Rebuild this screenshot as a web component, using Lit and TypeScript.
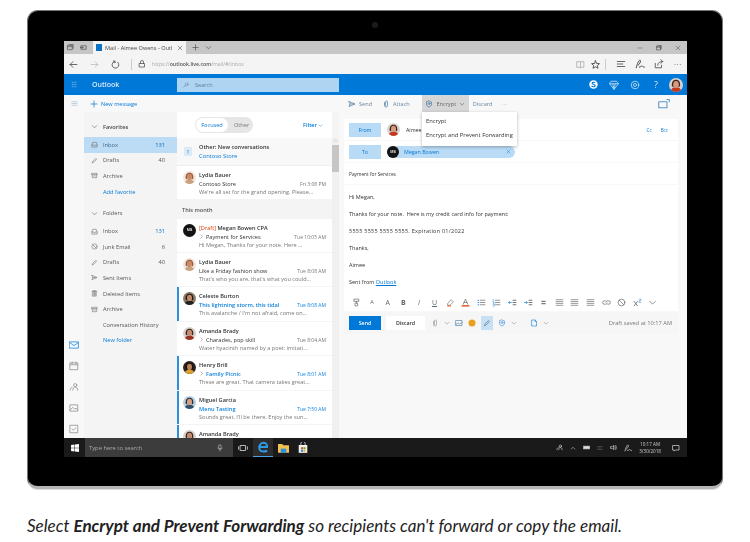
import { LitElement, html, css, svg } from "lit";
import { customElement } from "lit/decorators.js";

const ic = (w: number, body: unknown, color = "#666", vb = 16) => html`<svg class="ic" width=${w} height=${w} viewBox="0 0 ${vb} ${vb}" fill="none" stroke=${color} stroke-width="1.4" stroke-linecap="round" stroke-linejoin="round">${body}</svg>`;

const P = {
  inbox: svg`<path d="M2 13V9l2-6h8l2 6v4zM2 9h4l1 2h2l1-2h4"/>`,
  pen: svg`<path d="M3 13l1-3 7-7 2 2-7 7z"/>`,
  archive: svg`<path d="M2 3h12v3H2zM3 6v7h10V6M6 9h4"/>`,
  junk: svg`<circle cx="8" cy="8" r="6"/><path d="M4 4l8 8"/>`,
  sent: svg`<path d="M2 3l12 5-12 5 2-5zM4 8h8"/>`,
  trash: svg`<path d="M4 3h8v11H4zM3 3h10M6 1.500h4M6 6v6M10 6v6M8 6v6"/>`,
  chev: svg`<path d="M3 6l5 5 5-5"/>`,
  chevr: svg`<path d="M6 3l5 5-5 5"/>`,
  close: svg`<path d="M3 3l10 10M13 3L3 13"/>`,
  plus: svg`<path d="M8 2v12M2 8h12"/>`,
  clip: svg`<path d="M5 5v6a3 3 0 006 0V4a2 2 0 00-4 0v7"/>`,
  shield: svg`<path d="M8 2l5 2v4c0 3-2 5-5 6-3-1-5-3-5-6V4z"/><circle cx="8" cy="7" r="2"/>`,
  mail: svg`<path d="M1 3h14v10H1zM1 4l7 5 7-5"/>`,
  cal: svg`<path d="M2 3h12v11H2zM2 6h12M5 1.500v3M11 1.500v3"/>`,
  people: svg`<circle cx="10" cy="5" r="2.500"/><path d="M6 13c0-3 2-5 4-5s4 2 4 5M2 13c0-2 1-4 3-5"/>`,
  photo: svg`<path d="M2 3h12v10H2zM2 11l4-4 3 3 2-2 3 3"/>`,
  check: svg`<path d="M2 2h12v12H2zM5 8l2 2 4-4"/>`,
  pop: svg`<path d="M1 5h11v8H1zM12 2h3v3"/>`,
  search: svg`<circle cx="9.500" cy="6.500" r="4"/><path d="M6.500 9.500L2 14"/>`,
  back: svg`<path d="M14 8H2M7 3L2 8l5 5"/>`,
  fwd: svg`<path d="M2 8h12M9 3l5 5-5 5"/>`,
  refresh: svg`<path d="M12 4a6 6 0 11-5-1.500M5 1v3h3"/>`,
  lock: svg`<path d="M3 7h10v7H3zM5 7V4a3 3 0 016 0v3"/>`,
  tabs: svg`<path d="M2 3h10v10H2zM5 1h9v9M2 6h10" />`,
  aside: svg`<path d="M3 4h11v8H3zM1 8h6M5 6l2 2-2 2"/>`,
  book: svg`<path d="M2 3h12v10H2zM8 3v10"/>`,
  star: svg`<path d="M8 1.500l2 4.600 5 .4-3.800 3.300 1.200 4.900L8 12.100l-4.400 2.600 1.200-4.900L1 6.500l5-.4z"/>`,
  hub: svg`<path d="M2 4h12M2 8h9M2 12h12"/>`,
  ink: svg`<path d="M2 14c2-8 4-12 6-12s0 6-3 8M7 13c2 0 3-2 4-2s1 2 4 2"/>`,
  share: svg`<path d="M2 7v7h10V10M6 10c0-4 3-6 8-6M11 1l3 3-3 3"/>`,
  gem: svg`<path d="M4 2h8l3 4-7 9-7-9zM1 6h14M6 6l2 9 2-9"/>`,
  gear: svg`<circle cx="8" cy="8" r="6"/><circle cx="8" cy="8" r="2.500"/>`,
  mic: svg`<path d="M6 2h4v7H6zM4 8c0 2 2 3 4 3s4-1 4-3M8 11v3"/>`,
  task: svg`<path d="M4 4h8v8H4zM1 6v4M15 6v4"/>`,
  note: svg`<path d="M2 3h12v9H7l-3 2v-2H2z"/>`,
  vol: svg`<path d="M2 6h3l3-3v10l-3-3H2zM11 5c1 2 1 4 0 6M13 3c2 3 2 7 0 10"/>`,
  doc: svg`<path d="M4 2h6l3 3v9H4zM10 2v3h3"/>`,
  pic: svg`<path d="M2 3h12v10H2zM2 11l4-3 3 2 5-3"/>`,
  painter: svg`<path d="M4 2h8v4H4zM8 6v3M6 9h4v5H6z"/>`,
  highlight: svg`<path d="M3 10l6-7 4 4-6 6H4z" stroke="#888"/><path d="M3 14h5" stroke="#e07020" stroke-width="2"/>`,
  colorA: svg`<path d="M4 11l4-9 4 9M5.500 8h5" stroke="#777"/><path d="M2 14h12" stroke="#d83b01" stroke-width="2"/>`,
  bullets: svg`<path d="M2 4h1M2 8h1M2 12h1" stroke="#2b8fe0" stroke-width="2"/><path d="M6 4h8M6 8h8M6 12h8"/>`,
  numbers: svg`<path d="M2 2.500v3M2 7h1.500L2 9.500h2M2 11.500h2v3h-2" stroke="#2b8fe0" stroke-width="1"/><path d="M6 4h8M6 8h8M6 12h8"/>`,
  outdent: svg`<path d="M1 8h5M3 6L1 8l2 2" stroke="#2b8fe0"/><path d="M9 4h5M9 8h5M9 12h5" stroke-width="2"/>`,
  indent: svg`<path d="M1 8h5M4 6l2 2-2 2" stroke="#2b8fe0"/><path d="M9 4h5M9 8h5M9 12h5" stroke-width="2"/>`,
  quote: svg`<path d="M5 6h6M5 10h6" stroke-width="1.800"/>`,
  left: svg`<path d="M2 3h12M2 6.300h12M2 9.600h12M2 13h12" stroke-width="1.300"/>`,
  link: svg`<path d="M6 5H4a3 3 0 000 6h3a3 3 0 002-2M10 11h2a3 3 0 000-6H9a3 3 0 00-2 2"/>`,
  sup: svg`<path d="M2 6l6 8M8 6l-6 8" stroke="#666"/><path d="M11 2h3v3h-3v3h3" stroke="#2b8fe0" stroke-width="1"/>`,
};

const avatar = (s: number, bg: string, hair: string, skin: string, shirt = "#333") => html`<svg class="ic" width=${s} height=${s} viewBox="0 0 24 24"><defs><clipPath id="c"><circle cx="12" cy="12" r="12"/></clipPath></defs><g clip-path="url(#c)"><rect width="24" height="24" fill=${bg}/><path d="M3 24c0-6 4-8 9-8s9 2 9 8z" fill=${shirt}/><path d="M5 14C4 6 8 3 12 3s8 3 7 11l-3 2V9H8v7z" fill=${hair}/><ellipse cx="12" cy="11" rx="4.600" ry="5.800" fill=${skin}/></g></svg>`;

const initials = (s: number) => html`<b class="mb" style="width:${s}px;height:${s}px">MB</b>`;

const AV = {
  lydia: () => avatar(13, "#efe6df", "#a0583a", "#c98a66", "#c9a080"),
  mb: () => initials(13),
  celeste: () => avatar(13, "#8a7a68", "#1d1613", "#c08a66", "#222"),
  amanda: () => avatar(13, "#d8d2cc", "#3a2a22", "#c48d72", "#9a3020"),
  henry: () => avatar(13, "#2b2320", "#17100d", "#b98256", "#e0a030"),
  miguel: () => avatar(13, "#b7cfe0", "#28303a", "#d2a184", "#31506e"),
  aimee: (s = 13) => avatar(s, "#d9d3cf", "#4a2218", "#d49a80", "#c03a20"),
};

type Nav = { icon?: unknown; label: string; n?: string; sel?: boolean; link?: boolean; accent?: boolean; head?: boolean; cls?: string };
const nav: Nav[] = [
  { head: true, label: "Favorites", cls: "fav" },
  { icon: P.inbox, label: "Inbox", n: "131", sel: true, accent: true },
  { icon: P.pen, label: "Drafts", n: "40" },
  { icon: P.archive, label: "Archive" },
  { link: true, label: "Add favorite" },
  { head: true, label: "Folders", cls: "fold" },
  { icon: P.inbox, label: "Inbox", n: "131", accent: true },
  { icon: P.junk, label: "Junk Email", n: "6" },
  { icon: P.pen, label: "Drafts", n: "40" },
  { icon: P.sent, label: "Sent Items" },
  { icon: P.trash, label: "Deleted Items" },
  { icon: P.archive, label: "Archive" },
  { label: "Conversation History" },
  { link: true, label: "New folder" },
];

type Mail = { av: () => unknown; from: string; draft?: boolean; subj?: string; arrow?: boolean; unread?: boolean; time?: string; prev?: string; h: number; bar?: boolean };
const mailsA: Mail[] = [
  { av: AV.lydia, from: "Lydia Bauer", subj: "Contoso Store", time: "Fri 3:08 PM", prev: "We're all set for the grand opening. Please...", h: 34 },
];
const mailsB: Mail[] = [
  { av: AV.mb, from: "Megan Bowen CPA", draft: true, subj: "Payment for Services", arrow: true, time: "Tue 10:05 AM", prev: "Hi Megan, Thanks for your note.  Here  ...", h: 34 },
  { av: AV.lydia, from: "Lydia Bauer", subj: "Like a Friday fashion show", time: "Tue 8:08 AM", prev: "That's who you are, that's what you could...", h: 34 },
  { av: AV.celeste, from: "Celeste Burton", subj: "This lightning storm, this tidal", unread: true, bar: true, time: "Tue 8:08 AM", prev: "This avalanche / I'm not afraid, come on...", h: 35 },
  { av: AV.amanda, from: "Amanda Brady", subj: "Charades, pop skill", arrow: true, time: "Tue 8:04 AM", prev: "Water hyacinth named by a poet: imitati...", h: 34 },
  { av: AV.henry, from: "Henry Brill", subj: "Family Picnic", arrow: true, unread: true, bar: true, time: "Tue 8:01 AM", prev: "These are great. That camera takes great...", h: 35 },
  { av: AV.miguel, from: "Miguel Garcia", subj: "Menu Tasting", unread: true, bar: true, time: "Tue 7:50 AM", prev: "Sounds great, I'll be there. Enjoy the sun...", h: 34 },
  { av: AV.amanda, from: "Amanda Brady", bar: true, h: 14 },
];

const fmtIcons: unknown[] = [
  P.painter, "a", "A", "B", "I", "U", P.highlight, P.colorA, P.bullets, P.numbers, P.outdent, P.indent, P.quote, P.left, P.left, P.left, P.link, P.junk, P.sup, P.chev,
];

@customElement("app-root")
export class AppRoot extends LitElement {
  static styles = css`
    :host { display: block; width: 750px; height: 542px; background: #fff; overflow: hidden; font-family: "Open Sans", "Noto Sans", sans-serif; color: #333; }
    * { box-sizing: border-box; }
    .ic { display: block; flex: none; }
    .page { padding: 10px 0 0 27px; }
    .tablet { width: 696px; height: 479px; background: #000; border: 1px solid #777; border-bottom: 3px solid #b4b4b4; border-radius: 11px; padding: 30px 0 0 36px; box-shadow: 0 1px 1px #ddd; display: flex; flex-direction: column; filter: blur(0.3px); position: relative; }
    .cam { position: absolute; left: 344px; top: 11px; width: 6px; height: 6px; border-radius: 50%; background: #1c1c1c; }
    .screen { width: 623px; height: 416px; display: flex; flex-direction: column; background: #f8f8f8; overflow: hidden; }
    .row { display: flex; align-items: center; }
    .tabbar { height: 13px; background: #c6c6c6; padding-left: 3px; gap: 6px; }
    .tab { width: 93px; height: 13px; background: #f4f4f4; padding: 0 3px; gap: 3px; font-size: 5.6px; color: #444; white-space: nowrap; }
    .tab span { flex: 1; }
    .outl { width: 6px; height: 7px; background: #0a72c6; flex: none; }
    .win { margin-left: auto; gap: 13px; padding-right: 6px; }
    .addr { height: 20px; background: #f4f4f4; padding-left: 5px; }
    .nm { width: 12px; flex: none; }
    .url { font-size: 5.2px; color: #aaa; margin-left: 6px; }
    .url b { color: #555; font-weight: 600; }
    .sep { width: 1px; height: 11px; background: #ccc; flex: none; }
    .sep.a { margin: 0 6px 0 11px; }
    .sep.b { margin: 0 1px 0 -4px; }
    .tools { gap: 9px; margin-left: auto; padding-right: 4px; }
    .pair { gap: 6px; }
    .dots { color: #555; font-size: 8px; letter-spacing: .5px; line-height: 6px; width: 10px; text-align: center; }
    .bluebar { height: 21px; background: #0078d7; color: #fff; padding-left: 7px; }
    .brand { font-size: 7px; font-weight: 600; margin-left: 14px; width: 85px; color: #dcecf9; }
    .search { width: 162px; height: 14px; background: #aed4f2; color: #5a7f9e; font-size: 5.6px; padding-left: 6px; gap: 6px; }
    .bright { margin-left: auto; gap: 11px; padding-right: 4px; }
    .help { font-size: 9px; color: #cfe4f6; width: 10px; text-align: center; margin-right: -3px; }
    .cmd { height: 17px; background: #f8f8f8; font-size: 5.6px; padding-left: 7px; }
    .newm { gap: 3px; color: #0078d7; margin-left: 12px; width: 258px; flex: none; }
    .acts { align-items: stretch; height: 17px; flex: 1; }
    .act { gap: 3px; color: #6a87a0; }
    .act.att { margin-left: 10px; }
    .enc { width: 47px; background: #d6d6d6; justify-content: center; margin: 0 4px 0 12px; color: #666; }
    .more { margin-left: 9px; color: #8aa; letter-spacing: .6px; }
    .popw { margin-left: auto; padding-right: 17px; }
    .main { flex: 1; display: flex; min-height: 0; }
    .rail { width: 20px; display: flex; flex-direction: column; justify-content: flex-end; align-items: center; gap: 11px; padding: 0 0 4px; background: #f8f8f8; }
    .nav { width: 93px; background: #f4f4f4; font-size: 5.7px; color: #555; padding-top: 4px; }
    .ni { height: 15.6px; padding: 0 12px 0 7px; gap: 5px; }
    .ni .lab { flex: 1; white-space: nowrap; }
    .ni .noicon { width: 7px; flex: none; }
    .ni.sel { background: #bcdbf4; }
    .ni.head { font-weight: 600; color: #444; }
    .ni.fav { height: 21px; }
    .ni.fold { margin-top: 4px; height: 20px; font-weight: 400; color: #555; }
    .ni.link { color: #0078d7; }
    .n.accent { color: #0a6cb8; }
    .ni .lab.accent { color: #3a6a90; }
    .list { width: 162px; display: flex; flex-direction: column; background: #f4f4f4; font-size: 5.6px; position: relative; overflow: hidden; }
    .ltop { height: 26px; background: #fff; padding: 0 9px 0 18px; flex: none; width: 155px; }
    .pill { width: 58px; height: 16px; border-radius: 8px; background: #e6e6e6; padding: 1px; color: #777; }
    .pill i { font-style: normal; width: 32px; height: 14px; background: #fff; border-radius: 7px; color: #0078d7; display: flex; align-items: center; justify-content: center; margin-right: 6px; }
    .filter { margin-left: auto; color: #0078d7; font-weight: 600; gap: 1px; }
    .scroll { position: absolute; right: 0; top: 26px; bottom: 0; width: 7px; background: #f0f0f0; display: flex; flex-direction: column; align-items: center; }
    .thumb { height: 27px; width: 7px; background: #c6c6c6; margin-top: 2px; }
    .other { height: 28px; width: 155px; background: #f8f8f8; padding-left: 7px; gap: 7px; flex: none; border-bottom: 1px solid #eee; }
    .badge { width: 8px; height: 9px; background: #dceaf6; color: #0078d7; font-size: 5px; display: flex; align-items: center; justify-content: center; }
    .other div { line-height: 8.5px; }
    .other b { font-weight: 600; display: block; color: #333; }
    .other a { color: #0078d7; font-size: 5.8px; }
    .mail { width: 155px; background: #fff; padding: 5px 6px 0 4px; display: flex; gap: 3px; border-left: 2px solid transparent; margin-bottom: 1px; flex: none; line-height: 8.5px; }
    .mail.bar { border-left-color: #2b8fe0; }
    .mail .txt { flex: 1; min-width: 0; }
    .mail .l1 { font-weight: 600; white-space: nowrap; color: #333; }
    .draft { color: #d83b01; font-weight: 400; }
    .l2 { gap: 2px; white-space: nowrap; color: #333; }
    .l2 .t { margin-left: auto; font-size: 5px; color: #777; }
    .l2.un span:not(.t) { color: #0f82de; font-weight: 600; }
    .l2.un .t { color: #0f82de; }
    .l3 { color: #777; white-space: nowrap; overflow: hidden; }
    .month { height: 19px; padding-left: 5px; display: flex; align-items: center; font-weight: 600; color: #555; flex: none; }
    .read { flex: 1; padding: 7px 9px 0 5px; font-size: 5.3px; color: #333; position: relative; }
    .card { background: #fff; margin-bottom: 1px; padding-left: 5px; }
    .rr { height: 21px; gap: 6px; }
    .bt { width: 32px; height: 14px; background: #b9dbf5; color: #0078d7; display: flex; align-items: center; justify-content: center; font-size: 5.3px; }
    .chip { width: 128px; height: 12px; border-radius: 6px; background: #b9dbf5; color: #0078d7; gap: 5px; padding-right: 4px; }
    .chip span { flex: 1; }
    .ccs { margin-left: auto; gap: 9px; padding-right: 10px; color: #0078d7; font-size: 4.6px; }
    .mb { background: #141414; border-radius: 50%; color: #ddd; font-size: 3.4px; display: flex; align-items: center; justify-content: center; flex: none; font-weight: 700; }
    .subj { height: 21px; margin-bottom: 1px; font-size: 4.8px; }
    .body { height: 126px; padding-top: 4px; font-size: 5.5px; line-height: 17px; }
    .line { height: 17px; }
    .line.num { letter-spacing: .25px; }
    .body a { color: #0078d7; text-decoration: underline; }
    .fmt { gap: 6.6px; height: 21px; margin-top: 1px; padding-left: 3px; }
    .fg { width: 9px; text-align: center; color: #666; flex: none; line-height: 9px; font-size: 7px; }
    .fg.s { font-size: 5.5px; }
    .fg.B { font-weight: 700; }
    .fg.I { font-style: italic; }
    .fg.U { text-decoration: underline; }
    .bottom { height: 22px; padding-left: 5px; background: #f6f6f6; gap: 5px; }
    .primary { width: 32px; height: 14px; background: #0078d7; color: #fff; font-weight: 600; display: flex; align-items: center; justify-content: center; }
    .disc { width: 39px; height: 14px; background: #fff; color: #333; font-weight: 600; display: flex; align-items: center; justify-content: center; margin-right: 1px; }
    .saved { margin-left: auto; color: #777; padding-right: 6px; font-size: 5.7px; }
    .hl { background: #c7e0f4; padding: 3px 2px; }
    .sp { width: 3px; flex: none; }
    .menu { position: absolute; left: 83px; top: 0; width: 95px; height: 34px; background: #fff; box-shadow: 0 1px 3px rgba(0,0,0,.3); font-size: 5.8px; color: #333; padding: 2px 4px; line-height: 14px; white-space: nowrap; z-index: 2; }
    .taskbar { height: 19px; background: #1a1a1a; flex: none; color: #ddd; }
    .start { width: 21px; display: flex; justify-content: center; }
    .tsearch { width: 148px; height: 19px; background: #3c3c3c; color: #aaa; font-size: 5.8px; padding: 0 9px 0 4px; justify-content: space-between; }
    .tk { width: 20px; height: 19px; display: flex; align-items: center; justify-content: center; }
    .tk.on { background: #2c2c2c; border-bottom: 1px solid #4aa3e8; }
    .tray { margin-left: auto; gap: 7px; padding-right: 7px; }
    .clock { font-size: 4.6px; line-height: 6.5px; text-align: center; color: #ccc; margin-right: 4px; }
    .cap { margin: 27px 0 0 27px; font-family: Lato, "Open Sans", sans-serif; font-style: italic; font-size: 17.05px; color: #222; line-height: 20px; white-space: nowrap; }
    .cap b { font-weight: 700; }
  `;

  private mail(m: Mail) {
    return html`<div class="mail ${m.bar ? "bar" : ""}" style="height:${m.h - 1}px">
      ${m.av()}
      <div class="txt">
        <div class="l1">${m.draft ? html`<span class="draft">[Draft] </span>` : ""}${m.from}</div>
        ${m.subj ? html`<div class="row l2 ${m.unread ? "un" : ""}">${m.arrow ? ic(5, P.chevr, "#555") : ""}<span>${m.subj}</span><span class="t">${m.time}</span></div>
        <div class="l3">${m.prev}</div>` : ""}
      </div>
    </div>`;
  }

  render() {
    return html`
    <div class="page">
      <div class="tablet">
        <div class="cam"></div>
        <div class="screen">
          <div class="row tabbar">
            ${ic(7, P.tabs, "#444")}${ic(7, P.aside, "#444")}
            <div class="row tab"><i class="outl"></i><span>Mail - Aimee Owens - Outl</span>${ic(6, P.close, "#444")}</div>
            ${ic(7, P.plus, "#444")}${ic(7, P.chev, "#444")}
            <div class="row win">${ic(6, svg`<path d="M3 8h10"/>`, "#555")}${ic(6, P.tabs, "#333")}${ic(6, P.close, "#555")}</div>
          </div>
          <div class="row addr">
            ${ic(9, P.back, "#444")}<span class="nm"></span>${ic(9, P.fwd, "#bbb")}<span class="nm"></span>${ic(9, P.refresh, "#444")}
            <span class="sep a"></span>${ic(8, P.lock, "#444")}
            <div class="url">https://<b>outlook.live.com</b>/mail/#/inbox</div>
            <div class="row tools">
              <div class="row pair">${ic(9, P.book, "#aaa")}${ic(9, P.star, "#333")}</div><span class="sep b"></span>${ic(10, P.hub, "#555")}${ic(10, P.ink, "#333")}${ic(10, P.share, "#555")}
              <span class="dots">···</span>
            </div>
          </div>
          <div class="row bluebar">
            ${ic(7, svg`<path stroke-dasharray="1.600 2.600" stroke-width="2" d="M2 3h12M2 8h12M2 13h12" stroke-linecap="butt"/>`, "#dbeaf7")}
            <div class="brand">Outlook</div>
            <div class="row search">${ic(6, P.search, "#5a7f9e")}Search</div>
            <div class="row bright">
              <svg class="ic" width="9" height="9" viewBox="0 0 16 16"><circle cx="8" cy="8" r="7.500" fill="#fff"/><path d="M11 5c-1-1.500-5-1.500-5.500.5S11 7.500 11 10s-5 2.500-6.500.5" fill="none" stroke="#0078d7" stroke-width="2"/></svg>
              ${ic(10, P.gem, "#bcdcf5")}${ic(10, P.gear, "#bcdcf5")}<span class="help">?</span>${AV.aimee(14)}
            </div>
          </div>
          <div class="row cmd">
            ${ic(7, svg`<path d="M2 4h12M2 8h12M2 12h12"/>`, "#9db9d2")}
            <div class="row newm">${ic(8, P.plus, "#0078d7")}New message</div>
            <div class="row acts">
              <div class="row act">${ic(8, P.sent, "#4a7aa6")}Send</div>
              <div class="row act att">${ic(8, P.clip, "#4a7aa6")}Attach</div>
              <div class="row act enc">${ic(8, P.shield, "#4a7aa6")}Encrypt ${ic(6, P.chev, "#555")}</div>
              <div class="row act">Discard</div>
              <span class="row more">···</span>
              <div class="row popw">${ic(12, P.pop, "#5a97c8")}</div>
            </div>
          </div>
          <div class="main">
            <div class="rail">
              ${ic(10, P.mail, "#2b8fe0")}${ic(10, P.cal, "#999")}${ic(10, P.people, "#999")}${ic(10, P.photo, "#999")}${ic(10, P.check, "#999")}
            </div>
            <div class="nav">
              ${nav.map((n) => html`<div class="row ni ${n.sel ? "sel" : ""} ${n.head ? "head" : ""} ${n.link ? "link" : ""} ${n.cls ?? ""}">
                ${n.head ? ic(7, P.chev, "#666") : n.icon ? ic(7, n.icon, "#777") : html`<span class="noicon"></span>`}
                <span class="lab ${n.sel ? "accent" : ""}">${n.label}</span>
                ${n.n ? html`<span class="n ${n.accent ? "accent" : ""}">${n.n}</span>` : ""}
              </div>`)}
            </div>
            <div class="list">
              <div class="row ltop">
                <div class="row pill"><i>Focused</i>Other</div>
                <div class="row filter">Filter ${ic(5, P.chev, "#0078d7")}</div>
              </div>
              <div class="row other"><span class="badge">1</span><div><b>Other: New conversations</b><a>Contoso Store</a></div></div>
              ${mailsA.map((m) => this.mail(m))}
              <div class="month">This month</div>
              ${mailsB.map((m) => this.mail(m))}
              <div class="scroll">${ic(5, svg`<path d="M3 11l5-5 5 5"/>`, "#aaa")}<div class="thumb"></div></div>
            </div>
            <div class="read">
              <div class="menu"><div>Encrypt</div><div>Encrypt and Prevent Forwarding</div></div>
              <div class="card row rr"><span class="bt">From</span>${AV.aimee(13)}<span>Aimee</span><div class="row ccs"><span>Cc</span><span>Bcc</span></div></div>
              <div class="card row rr"><span class="bt">To</span><div class="row chip">${initials(12)}<span>Megan Bowen</span>${ic(5, P.close, "#0078d7")}</div></div>
              <div class="card row subj">Payment for Services</div>
              <div class="card body">
                <div class="line">Hi Megan,</div>
                <div class="line">Thanks for your note.&nbsp; Here is my credit card info for payment:</div>
                <div class="line num">5555 5555 5555 5555. Expiration 01/2022</div>
                <div class="line">Thanks,</div>
                <div class="line">Aimee</div>
                <div class="line">Sent from <a>Outlook</a></div>
                <div class="row fmt">
                  ${fmtIcons.map((f) => typeof f === "string"
                    ? html`<span class="fg ${f === "a" ? "s" : f}">${f === "a" ? "A" : f}</span>`
                    : ic(9, f, "#777"))}
                </div>
              </div>
              <div class="row bottom">
                <span class="primary">Send</span><span class="disc">Discard</span>
                ${ic(8, P.clip, "#999")}${ic(6, P.chev, "#888")}${ic(8, P.pic, "#5a86aa")}
                <svg class="ic" width="8" height="8" viewBox="0 0 16 16"><circle cx="8" cy="8" r="7" fill="#e8a020"/></svg>
                <span class="hl">${ic(8, P.pen, "#4a7aa6")}</span>
                ${ic(8, P.shield, "#4a9ae0")}${ic(6, P.chev, "#888")}<span class="sp"></span>${ic(8, P.doc, "#2b8fe0")}${ic(6, P.chev, "#888")}
                <span class="saved">Draft saved at 10:17 AM</span>
              </div>
            </div>
          </div>
          <div class="row taskbar">
            <div class="start"><svg class="ic" width="8" height="8" viewBox="0 0 16 16" fill="#fff"><path d="M0 2l7-1v6.500H0zM8 1l8-1v7.500H8zM0 8.500h7V15l-7-1zM8 8.500h8V16l-8-1z"/></svg></div>
            <div class="row tsearch"><span>Type here to search</span>${ic(8, P.mic, "#aaa")}</div>
            <div class="tk">${ic(10, P.task, "#ccc")}</div>
            <div class="tk on"><svg class="ic" width="10" height="12" viewBox="0 0 12 14" fill="none" stroke="#2d9ae8" stroke-width="2.400"><path d="M2 7h9c0-3-2-5-4.500-5S1.500 4.500 1.500 7.500 3.500 12.500 7 12.500c1.500 0 3-.5 4-1"/></svg></div>
            <div class="tk"><svg class="ic" width="11" height="10" viewBox="0 0 16 14"><path d="M0 1h6l2 2h8v11H0z" fill="#f0c050"/><path d="M4 8h8v6H4z" fill="#2b8fe0"/></svg></div>
            <div class="tk"><svg class="ic" width="10" height="11" viewBox="0 0 14 15"><path d="M1 4h12v11H1z" fill="#f2f2f2"/><path d="M4 5V2a3 3 0 016 0v3" stroke="#f2f2f2" fill="none"/><path d="M4 7h3v3H4z" fill="#e0602a"/><path d="M7.500 7h3v3h-3z" fill="#60a830"/><path d="M4 10.500h3v3H4z" fill="#2b8fe0"/><path d="M7.500 10.500h3v3h-3z" fill="#f0b020"/></svg></div>
            <div class="row tray">
              ${ic(7, P.people, "#ddd")}${ic(6, svg`<path d="M3 11l5-5 5 5"/>`, "#ddd")}${ic(7, svg`<path d="M1 5h14v6H1z" fill="#ddd"/>`, "#ddd")}${ic(6, P.hub, "#666")}${ic(7, P.vol, "#ddd")}${ic(8, P.ink, "#ddd")}
              <div class="clock">10:17 AM<br/>3/30/2018</div>
              ${ic(8, P.note, "#ddd")}
            </div>
          </div>
        </div>
      </div>
    </div>
    <div class="cap">Select <b>Encrypt and Prevent Forwarding</b> so recipients can't forward or copy the email.</div>`;
  }
}
